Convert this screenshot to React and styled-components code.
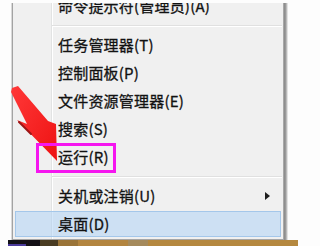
import React from "react";
import styled, { createGlobalStyle, css } from "styled-components";

const GlobalStyle = createGlobalStyle`
  html, body { margin: 0; padding: 0; background: #fdfdfd; }
  body { font-family: "Noto Sans CJK SC", "Noto Sans", sans-serif; }
`;

const Page = styled.div`
  position: relative;
  width: 298px;
  height: 246px;
  overflow: hidden;
  box-sizing: border-box;
  padding-top: 3px;
  display: flex;
  flex-direction: column;
  background: #fdfdfd;
`;

const Menu = styled.div`
  margin-left: 12px;
  width: 272px;
  height: 237px;
  box-sizing: border-box;
  border-left: 1px solid #a3a3a3;
  border-right: 1px solid #a8a8a8;
  border-bottom: 1px solid #a6a6a6;
  background: linear-gradient(
    to right,
    #f0f0f0 0 38px,
    #e2e3e3 38px 39px,
    #ffffff 39px 40px,
    #f0f0f0 40px
  );
  box-shadow: -1px 0 0 #d9d9d9, 1px 0 0 #8e8e8e, 2px 0 0 #9a9a9a,
    3px 0 0 #bababa, 4px 0 0 #e2e2e2;
  overflow: hidden;
`;

const List = styled.div`
  margin-top: -11px;
  display: flex;
  flex-direction: column;
`;

const Item = styled.div`
  display: flex;
  align-items: center;
  height: 28px;
  box-sizing: border-box;
  padding-left: 45px;
  font-size: 15px;
  line-height: 28px;
  letter-spacing: 0.2px;
  color: #121212;
  -webkit-text-stroke: 0.3px #121212;
  white-space: nowrap;
  ${(p) =>
    p.$active &&
    css`
      margin: 1px 2px;
      height: 26px;
      padding-left: 42px;
      background: rgba(170, 208, 245, 0.5);
      border: 1px solid #a4c7ea;
    `}
`;

const Separator = styled.div`
  height: 11px;
  box-sizing: border-box;
  padding: 5px 1px 0 39px;
  &::after {
    content: "";
    display: block;
    height: 1px;
    background: #e0e0e0;
    border-bottom: 1px solid #ffffff;
  }
`;

const SubArrow = styled.span`
  margin-left: auto;
  margin-right: 13px;
  width: 0;
  height: 0;
  border-top: 4px solid transparent;
  border-bottom: 4px solid transparent;
  border-left: 5px solid #1e1e1e;
`;

const Ground = styled.div`
  height: 6px;
  margin-left: 8px;
  background: linear-gradient(
    to right,
    #111118 0 10px,
    #141016 10px 32px,
    #4a3c22 32px 50px,
    #9a7438 50px 70px,
    #b3853f 70px 120px,
    #a58a5c 120px 140px,
    #b5883f 140px
  );
  position: relative;
  &::after {
    content: "";
    position: absolute;
    left: 0;
    bottom: 0;
    width: 18px;
    height: 2px;
    background: #4a3a9a;
  }
`;

const Mark = styled.div`
  position: absolute;
  left: 36px;
  top: 143px;
  width: 80px;
  height: 30px;
  box-sizing: border-box;
  border: 3px solid #f516ef;
  pointer-events: none;
`;

const Overlay = styled.svg`
  position: absolute;
  left: 0;
  top: 0;
  pointer-events: none;
`;

const items = [
  { label: "命令提示符(管理员)(A)" },
  { sep: true },
  { label: "任务管理器(T)" },
  { label: "控制面板(P)" },
  { label: "文件资源管理器(E)" },
  { label: "搜索(S)" },
  { label: "运行(R)" },
  { sep: true },
  { label: "关机或注销(U)", sub: true },
  { label: "桌面(D)", active: true },
];

export default function App() {
  return (
    <>
      <GlobalStyle />
      <Page>
        <Menu>
          <List>
            {items.map((it, i) =>
              it.sep ? (
                <Separator key={i} />
              ) : (
                <Item key={i} $active={it.active}>
                  {it.label}
                  {it.sub && <SubArrow />}
                </Item>
              )
            )}
          </List>
        </Menu>
        <Ground />
        <Overlay width="298" height="246" viewBox="0 0 298 246">
          <defs>
            <linearGradient id="ar" x1="0" y1="0" x2="1" y2="1">
              <stop offset="0" stopColor="#ff3838" />
              <stop offset="1" stopColor="#ee1212" />
            </linearGradient>
          </defs>
          <polygon
            points="12,88 18,86 48,121 56,124 57,161 17,120 27,124 11,92"
            fill="url(#ar)"
          />
          <line
            x1="19"
            y1="122"
            x2="31"
            y2="134"
            stroke="#9c1616"
            strokeWidth="2"
            strokeLinecap="round"
          />
        </Overlay>
        <Mark />
      </Page>
    </>
  );
}
